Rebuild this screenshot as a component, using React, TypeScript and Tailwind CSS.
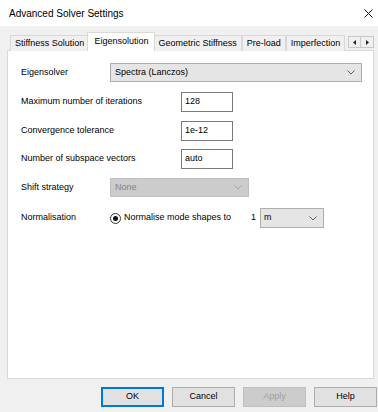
import React from 'react';

const font = "font-['Liberation_Sans','Arial',sans-serif]";

function Chevron({ color = '#606060' }: { color?: string }) {
  return (
    <svg width="8" height="5" viewBox="0 0 8 5" fill="none">
      <path d="M0.5 0.5 L4 4 L7.5 0.5" stroke={color} strokeWidth="1" />
    </svg>
  );
}

function Tab({ label, active }: { label: string; active?: boolean }) {
  if (active) {
    return (
      <div className="h-[19px] px-[6px] -mx-[2px] bg-white border border-[#d9d9d9] border-b-0 relative z-10 flex items-center whitespace-nowrap text-black">
        {label}
      </div>
    );
  }
  return (
    <div className="h-[16px] px-[4px] bg-[#f0f0f0] border border-[#d9d9d9] border-b-0 flex items-center whitespace-nowrap text-black">
      {label}
    </div>
  );
}

function Field({ value }: { value: string }) {
  return (
    <div className="w-[52px] h-[20px] bg-white border border-[#7a7a7a] flex items-center px-[3px] text-black">
      {value}
    </div>
  );
}

function Btn({ label, primary, disabled }: { label: string; primary?: boolean; disabled?: boolean }) {
  if (primary) {
    return (
      <div className="w-[63px] h-[20px] bg-[#e1e1e1] border-2 border-[#0078d7] flex items-center justify-center text-black">
        {label}
      </div>
    );
  }
  return (
    <div
      className={
        disabled
          ? 'w-[63px] h-[20px] bg-[#cccccc] border border-[#bfbfbf] flex items-center justify-center text-[#a0a0a0]'
          : 'w-[63px] h-[20px] bg-[#e1e1e1] border border-[#adadad] flex items-center justify-center text-black'
      }
    >
      {label}
    </div>
  );
}

export default function App() {
  return (
    <div className={`w-[378px] h-[412px] bg-[#f0f0f0] flex flex-col ${font} text-[9px]`}>
      {/* title bar */}
      <div className="h-[26px] bg-white flex items-center justify-between pl-[9px] pr-[5px] shrink-0">
        <span className="text-[10px] text-black">Advanced Solver Settings</span>
        <svg width="9" height="9" viewBox="0 0 9 9">
          <path d="M0.5 0.5 L8.5 8.5 M8.5 0.5 L0.5 8.5" stroke="#111" strokeWidth="1" />
        </svg>
      </div>

      {/* tabs */}
      <div className="h-[25px] pl-[10px] flex items-end relative">
        <Tab label="Stiffness Solution" />
        <Tab label="Eigensolution" active />
        <Tab label="Geometric Stiffness" />
        <Tab label="Pre-load" />
        <Tab label="Imperfection" />
        <div className="absolute left-[348px] top-[10px] flex">
          <div className="w-[13px] h-[12px] bg-[#f0f0f0] border border-[#c8c8c8] flex items-center justify-center">
            <svg width="3" height="5" viewBox="0 0 3 5"><path d="M3 0 L0 2.5 L3 5 Z" fill="#222" /></svg>
          </div>
          <div className="w-[13px] h-[12px] bg-[#f0f0f0] border border-[#c8c8c8] border-l-0 flex items-center justify-center">
            <svg width="3" height="5" viewBox="0 0 3 5"><path d="M0 0 L3 2.5 L0 5 Z" fill="#222" /></svg>
          </div>
        </div>
      </div>

      {/* panel */}
      <div className="ml-[7px] w-[367px] h-[329px] -mt-[1px] bg-white border border-[#d9d9d9] pl-[13px] text-black">
        <div className="mt-[12px] h-[19px] flex items-center">
          <span className="w-[89px]">Eigensolver</span>
          <div className="w-[252px] h-[19px] bg-[#e5e5e5] border border-[#adadad] flex items-center justify-between pl-[4px] pr-[6px]">
            <span>Spectra (Lanczos)</span>
            <Chevron />
          </div>
        </div>

        <div className="mt-[10px] h-[20px] flex items-center">
          <span className="w-[160px]">Maximum number of iterations</span>
          <Field value="128" />
        </div>

        <div className="mt-[9px] h-[20px] flex items-center">
          <span className="w-[160px]">Convergence tolerance</span>
          <Field value="1e-12" />
        </div>

        <div className="mt-[8px] h-[20px] flex items-center">
          <span className="w-[160px]">Number of subspace vectors</span>
          <Field value="auto" />
        </div>

        <div className="mt-[9px] h-[19px] flex items-center">
          <span className="w-[89px]">Shift strategy</span>
          <div className="w-[139px] h-[19px] bg-[#cccccc] border border-[#bfbfbf] flex items-center justify-between pl-[4px] pr-[6px] text-[#838383]">
            <span>None</span>
            <Chevron color="#a8a8a8" />
          </div>
        </div>

        <div className="mt-[11px] h-[20px] flex items-center">
          <span className="w-[89px]">Normalisation</span>
          <div className="w-[11px] h-[11px] rounded-full border border-[#333] flex items-center justify-center">
            <div className="w-[5px] h-[5px] rounded-full bg-[#111]" />
          </div>
          <span className="ml-[3px] w-[127px]">Normalise mode shapes to</span>
          <span className="w-[9px]">1</span>
          <div className="w-[64px] h-[20px] bg-[#e5e5e5] border border-[#adadad] flex items-center justify-between pl-[3px] pr-[6px]">
            <span>m</span>
            <Chevron />
          </div>
        </div>
      </div>

      {/* buttons */}
      <div className="mt-[8px] pl-[101px] flex gap-[8px]">
        <Btn label="OK" primary />
        <Btn label="Cancel" />
        <Btn label="Apply" disabled />
        <Btn label="Help" />
      </div>
    </div>
  );
}
